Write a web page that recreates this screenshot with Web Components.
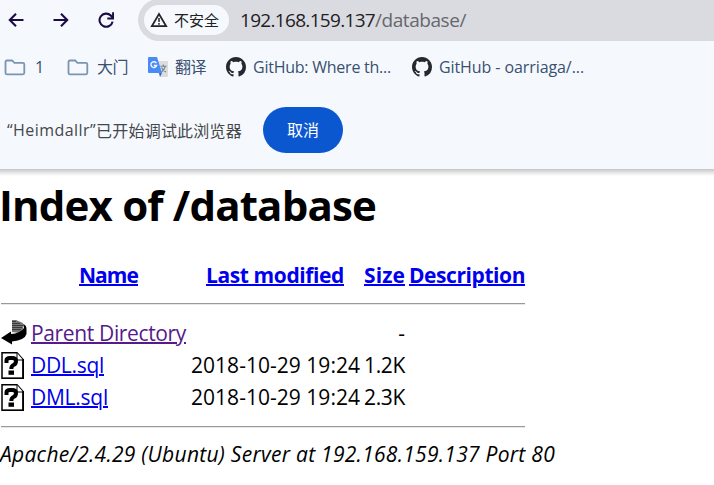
<!DOCTYPE html>
<html lang="zh-CN"><head><meta charset="utf-8"><title>Index of /database</title>
<style>
html,body{margin:0;height:485px;overflow:hidden;background:#fff}
body{font-family:"Open Sans","Noto Sans CJK SC",sans-serif}
</style></head><body>
<browser-window></browser-window>
<script>
const define = (name, html, ready) => customElements.define(name, class extends HTMLElement {
  connectedCallback() {
    if (this.shadowRoot) return;
    const t = document.createElement('template');
    t.innerHTML = html;
    this.attachShadow({mode: 'open'}).append(t.content.cloneNode(true));
    if (ready) ready(this, this.shadowRoot);
  }
});

/* A single line of text, tracked so that it fills the width given in "w". */
define('fit-text', `<style>:host{display:inline-block;white-space:pre}</style><slot></slot>`, el => {
  const w = +el.getAttribute('w'), n = el.textContent.length;
  const natural = el.getBoundingClientRect().width;
  if (w && n) { el.style.letterSpacing = ((w - natural) / n) + 'px'; el.style.width = w + 'px'; }
});

const icons = {
  back: ['0 0 16 16', '<path d="M15.5 8H2M8 1.8 1.8 8 8 14.2" fill="none" stroke="#1c0b46" stroke-width="2.1"/>'],
  forward: ['0 0 16 16', '<path d="M.5 8H14M8 1.8 14.2 8 8 14.2" fill="none" stroke="#1c0b46" stroke-width="2.1"/>'],
  reload: ['0 0 16 16', '<path d="M14.6 9.6A6.6 6.6 0 1 1 12.8 3.5L14.6 5.5" fill="none" stroke="#1c0b46" stroke-width="2.1"/><path d="M15.1.3V6.5H9.3" fill="none" stroke="#1c0b46" stroke-width="2"/>'],
  warn: ['0 0 18 16', '<path d="M9 2 16.2 14.2H1.8Z" fill="none" stroke="#222326" stroke-width="1.7"/><path d="M9 6v4M9 11v1.7" stroke="#222326" stroke-width="1.5"/>'],
  folder: ['0 0 22 17', '<path d="M3 1.5H8.2L10.4 3.8H18.8Q20.3 3.8 20.3 5.3V13.8Q20.3 15.3 18.8 15.3H3Q1.5 15.3 1.5 13.8V3Q1.5 1.5 3 1.5Z" fill="none" stroke="#7b94b1" stroke-width="1.8"/>'],
  translate: ['0 0 20 20', '<path d="M8 4H19Q20 4 20 5V19Q20 20 19 20H12Z" fill="#dcdcdc"/><path d="M11 16H14L12 20Z" fill="#3668c8"/><path d="M1 0H9L14 16H1Q0 16 0 15V1Q0 0 1 0Z" fill="#4a8af4"/><path d="M8.4 6.2A2.9 2.9 0 1 0 8.6 8.5H5.8" fill="none" stroke="#eef5ff" stroke-width="1.4"/><path d="M12.4 9.2H18.5M15.3 7.6V9.2M17.3 9.2Q16.5 13 13.3 15.2M13.5 10.5Q15 13.5 18 15" fill="none" stroke="#6d8592" stroke-width="1.1"/>'],
  github: ['0 0 16 16', '<path fill="#24292f" d="M8 0C3.58 0 0 3.58 0 8c0 3.54 2.29 6.53 5.47 7.59.4.07.55-.17.55-.38 0-.19-.01-.82-.01-1.49-2.01.37-2.53-.49-2.69-.94-.09-.23-.48-.94-.82-1.13-.28-.15-.68-.52-.01-.53.63-.01 1.08.58 1.23.82.72 1.21 1.87.87 2.33.66.07-.52.28-.87.51-1.07-1.78-.2-3.64-.89-3.64-3.95 0-.87.31-1.59.82-2.15-.08-.2-.36-1.02.08-2.12 0 0 .67-.21 2.2.82.64-.18 1.32-.27 2-.27s1.36.09 2 .27c1.53-1.04 2.2-.82 2.2-.82.44 1.1.16 1.92.08 2.12.51.56.82 1.27.82 2.15 0 3.07-1.87 3.75-3.65 3.95.29.25.54.73.54 1.48 0 1.07-.01 1.93-.01 2.2 0 .21.15.46.55.38A8.01 8.01 0 0 0 16 8c0-4.42-3.58-8-8-8Z"/>'],
  parent: ['0 0 26 26', '<path d="M11 0H15L22 3V9L18 13 11 12Z" fill="#777"/><path d="M11 1.5H15M11 3.5H19M11 5.5H22M11 7.5H21M11 9.5H20" stroke="#333" stroke-width=".9"/><path d="M22 4Q25.5 5 25.5 9V14Q24 20 11 21.5V24.5L0 18 10 11.5V14Q19 13.5 23 8Z" fill="#000"/>'],
  unknown: ['0 0 23 27', '<path d="M1 .8H16L22 7.5V26.2H1Z" fill="#fff" stroke="#000" stroke-width="1.5"/><path d="M16 1V8H22" fill="#fff" stroke="#000" stroke-width="1"/><path d="M22.2 7V26.5H1" fill="none" stroke="#000" stroke-width="1.6"/><path d="M5.5 11V8.5Q5.5 6 9 6H11Q15 6 15 9T12.5 13Q10.3 14 10.3 17" fill="none" stroke="#000" stroke-width="4"/><path d="M7.5 18.5H13V22.8H7.5Z" fill="#000"/>']
};
define('ui-icon', `<style>:host{display:block;flex:none}svg{display:block;width:100%;height:100%}</style><svg></svg>`, (el, r) => {
  const [box, art] = icons[el.getAttribute('name')], s = r.querySelector('svg');
  s.setAttribute('viewBox', box); s.innerHTML = art;
  el.style.width = el.getAttribute('w') + 'px';
  el.style.height = (el.getAttribute('h') || el.getAttribute('w')) + 'px';
});

define('nav-bar', `<style>
:host{display:flex;align-items:center;height:40px;margin-bottom:1px;padding-left:7.5px;box-sizing:border-box}
.f{margin-left:29px}.r{margin-left:29px}
.omni{flex:1;margin-left:24.5px;height:42px;border-radius:21px 0 0 21px;background:#dadbe0;display:flex;align-items:center;padding-left:6px;box-sizing:border-box}
.chip{display:flex;align-items:center;width:85px;height:30px;border-radius:15px;background:#f5f9fe;padding-left:6px;box-sizing:border-box}
.chip fit-text{font-size:15px;color:#202124;margin-left:6px;line-height:30px}
.url{font-size:19px;line-height:40px;color:#1f2023;margin-left:11px;display:flex;margin-top:-1px}
.p{color:#66686c}
</style><ui-icon name="back" w="16"></ui-icon><ui-icon class="f" name="forward" w="16"></ui-icon><ui-icon class="r" name="reload" w="16"></ui-icon>
<div class="omni"><div class="chip"><ui-icon name="warn" w="18" h="16"></ui-icon><fit-text w="45">不安全</fit-text></div>
<div class="url"><fit-text w="135">192.168.159.137</fit-text><fit-text class="p" w="91">/database/</fit-text></div></div>`);

define('book-mark', `<style>:host{display:flex;align-items:center;font-size:16px;line-height:24px;color:#39506f}::slotted(fit-text){margin-left:var(--gap,8px)}</style><slot name="icon"></slot><slot></slot>`);

define('bookmarks-bar', `<style>
:host{display:flex;height:52px;align-items:center;padding-left:4px;box-sizing:border-box}
book-mark+book-mark{margin-left:var(--m)}
</style>
<book-mark style="--gap:9px"><ui-icon slot="icon" name="folder" w="22" h="17"></ui-icon><fit-text w="9">1</fit-text></book-mark>
<book-mark style="--m:23px"><ui-icon slot="icon" name="folder" w="22" h="17"></ui-icon><fit-text w="31">大门</fit-text></book-mark>
<book-mark style="--m:20px;--gap:7px"><ui-icon slot="icon" name="translate" w="20"></ui-icon><fit-text w="31">翻译</fit-text></book-mark>
<book-mark style="--m:20px;--gap:7px"><ui-icon slot="icon" name="github" w="20"></ui-icon><fit-text w="138">GitHub: Where th...</fit-text></book-mark>
<book-mark style="--m:21px;--gap:7px"><ui-icon slot="icon" name="github" w="20"></ui-icon><fit-text w="145">GitHub - oarriaga/...</fit-text></book-mark>`);

define('info-bar', `<style>
:host{display:flex;align-items:center;height:74px;padding:0 0 2px 7px;font-size:16px;color:#45474a}
button{font:inherit;color:#fff;background:#0b57d0;border:0;border-radius:23px;width:80px;height:46px;padding:0 0 2px;margin-left:20px}
.m{width:236px;display:flex}
.c{margin-top:-1px}
</style><div class="m"><fit-text w="89">“Heimdallr”</fit-text><fit-text class="c" w="146">已开始调试此浏览器</fit-text></div><button><fit-text w="32">取消</fit-text></button>`);

define('dir-row', `<style>
:host{display:grid;grid-template-columns:27px 161px 169px 44px 122px;column-gap:1px;align-items:center;height:32px;padding-left:1px}
.n{padding-left:2px}.s{text-align:right}
</style><slot name="icon"></slot><div class="n"><slot name="name"></slot></div><div><slot name="date"></slot></div><div class="s"><slot name="size"></slot></div>`);

define('dir-listing', `<style>
:host{display:block;color:#000;font-size:21px;line-height:32px}
h1{margin:0 0 0 -1px;padding-top:3px;font-size:42px;line-height:60px;height:60px;font-weight:700}
a{color:#00e;display:flex;align-items:flex-start}
a fit-text{text-decoration:underline;text-decoration-thickness:1.5px;text-underline-offset:1px}
.v{color:#551a8b}
.head{display:flex;padding:24px 0 0 79px;font-weight:700;height:32px}
.head a fit-text{text-decoration-thickness:2px}
.rule{width:524px;height:2px;box-sizing:border-box;margin-left:1px;border-top:1px solid #999;border-bottom:1px solid #e7e7e7}
address{font-style:italic;padding-top:10px}
</style>
<h1><fit-text w="377">Index of /database</fit-text></h1>
<div class="head"><a><fit-text w="59">Name</fit-text></a><a style="margin-left:68px"><fit-text w="138">Last modified</fit-text></a><a style="margin-left:20px"><fit-text w="41">Size</fit-text></a><a style="margin-left:4px"><fit-text w="116">Description</fit-text></a></div>
<div class="rule" style="margin-top:12px;margin-bottom:12px"></div>
<dir-row><ui-icon slot="icon" name="parent" w="26"></ui-icon><a slot="name" class="v"><fit-text w="155">Parent Directory</fit-text></a><span slot="size">-</span></dir-row>
<dir-row><ui-icon slot="icon" name="unknown" w="23" h="27"></ui-icon><a slot="name"><fit-text w="73">DDL.sql</fit-text></a><fit-text slot="date" w="169">2018-10-29 19:24</fit-text><fit-text slot="size" w="41">1.2K</fit-text></dir-row>
<dir-row><ui-icon slot="icon" name="unknown" w="23" h="27"></ui-icon><a slot="name"><fit-text w="77">DML.sql</fit-text></a><fit-text slot="date" w="169">2018-10-29 19:24</fit-text><fit-text slot="size" w="41">2.3K</fit-text></dir-row>
<div class="rule" style="margin-top:13px"></div>
<address><fit-text w="555">Apache/2.4.29 (Ubuntu) Server at 192.168.159.137 Port 80</fit-text></address>`);

define('browser-window', `<style>
:host{display:block;height:485px;overflow:hidden}
header{background:#f5f9fe;height:169px}
.shade{height:7px;background:linear-gradient(#c5c6c8,#e2e2e3 45%,#fff)}
main{margin-top:-4px}
</style><header><nav-bar></nav-bar><bookmarks-bar></bookmarks-bar><info-bar></info-bar></header><div class="shade"></div><main><dir-listing></dir-listing></main>`);
</script></body></html>
